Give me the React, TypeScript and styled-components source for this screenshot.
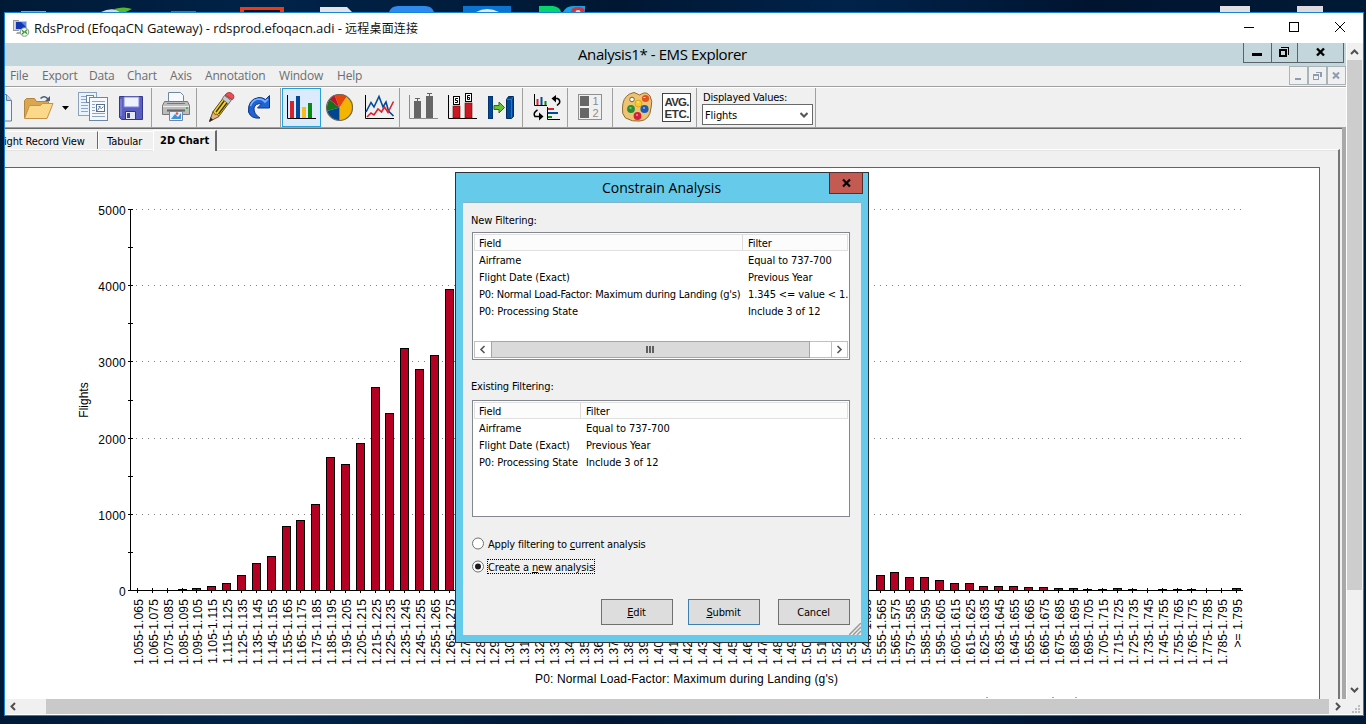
import React from "react";
import styled, { createGlobalStyle } from "styled-components";

const Global = createGlobalStyle`
  * { box-sizing: border-box; }
  html, body { margin: 0; padding: 0; }
  body { width: 1366px; height: 724px; overflow: hidden; background: #001a38; }
`;

const tahoma = `"DejaVu Sans Condensed", "DejaVu Sans", sans-serif`;
const segoe = `"Open Sans", "Noto Sans", "Noto Sans CJK SC", sans-serif`;

const Desktop = styled.div`
  width: 1366px;
  height: 724px;
  overflow: hidden;
  background: linear-gradient(90deg, #001a36 0%, #002348 20%, #001733 45%, #00234a 62%, #001430 80%, #001a36 100%);
  display: flex;
  flex-direction: column;
  font-family: ${tahoma};
  font-size: 11px;
  color: #000;
`;

const Wallpaper = styled.svg`
  display: block;
  flex: none;
`;

const RdpWindow = styled.div`
  margin-left: 4px;
  width: 1360px;
  height: 704px;
  border: 1px solid #1883d7;
  background: #fff;
  display: flex;
  flex-direction: column;
`;

const RdpTitleBar = styled.div`
  height: 30px;
  flex: none;
  display: flex;
  align-items: center;
  justify-content: space-between;
  padding-left: 8px;
`;

const RdpTitle = styled.div`
  display: flex;
  align-items: center;
  font-family: ${segoe};
  font-size: 13px;
  letter-spacing: -0.08px;
  color: #111;
  white-space: pre;
  svg { margin-right: 4px; }
`;

const HanText = styled.span`
  font-family: "Noto Sans CJK SC", sans-serif;
  font-size: 12px;
  line-height: 16px;
  letter-spacing: 0.2px;
`;

const RdpBody = styled.div`
  display: flex;
  height: 656px;
`;

const Remote = styled.div`
  width: 1341px;
  height: 656px;
  background: #f0f0f0;
  display: flex;
  flex-direction: column;
`;

const VScroll = styled.div`
  width: 17px;
  border-left: 1px solid #fff;
  background: #f0f0f0;
  display: flex;
  flex-direction: column;
  justify-content: space-between;
`;

const VThumb = styled.div`
  width: 15px;
  height: 530px;
  background: #cdcdcd;
  margin-bottom: auto;
`;

const HScroll = styled.div`
  height: 15px;
  display: flex;
  background: #f0f0f0;
`;

const HThumb = styled.div`
  margin-left: 24px;
  width: 1283px;
  background: #c9c9c9;
`;

const AppTitleBar = styled.div`
  height: 23px;
  flex: none;
  background: #c3d6dc;
  display: flex;
  align-items: flex-start;
  justify-content: flex-end;
`;

const AppTitle = styled.div`
  flex: 1;
  padding-left: 573px;
  line-height: 23px;
  font-family: ${segoe};
  font-size: 15px;
  letter-spacing: -0.4px;
  white-space: nowrap;
`;

const MenuBar = styled.div`
  height: 20px;
  flex: none;
  display: flex;
  justify-content: space-between;
`;

const MenuItems = styled.div`
  display: flex;
  padding-left: 5px;
  font-family: ${segoe};
  font-size: 12px;
  line-height: 20px;
  color: #6d6d6d;
`;

const MenuItem = styled.span<{ $w: number }>`
  width: ${(p) => p.$w}px;
  letter-spacing: -0.2px;
  white-space: nowrap;
`;

const Toolbar = styled.div`
  height: 43px;
  flex: none;
  display: flex;
  border-top: 1px solid #a0a0a0;
  border-bottom: 1px solid #696969;
  box-shadow: inset 0 1px 0 #fff, inset 0 -1px 0 #a0a0a0;
  padding: 1px 0;
`;

const ToolGroup = styled.div<{ $lead?: number }>`
  display: flex;
  padding-left: ${(p) => p.$lead ?? 0}px;
  border-right: 1px solid #a0a0a0;
`;

const ToolButton = styled.div<{ $w: number; $active?: boolean }>`
  width: ${(p) => p.$w}px;
  height: 39px;
  background: ${(p) => (p.$active ? "#dcebfc" : "transparent")};
  box-shadow: ${(p) => (p.$active ? "inset 0 0 0 1px #26a0da" : "none")};
  svg { display: block; }
`;

const ValuesBox = styled.div`
  width: 118px;
  padding: 3px 0 0 5px;
`;

const ValuesLabel = styled.div`
  height: 13px;
  line-height: 13px;
  padding-left: 1px;
  letter-spacing: -0.2px;
  white-space: nowrap;
`;

const Select = styled.div`
  width: 111px;
  height: 21px;
  border: 1px solid #696969;
  background: #fff;
  display: flex;
  align-items: center;
  justify-content: space-between;
  padding: 1px 4px 0 2px;
  letter-spacing: -0.1px;
`;

const TabRow = styled.div`
  height: 20px;
  flex: none;
  display: flex;
  align-items: flex-end;
`;

const Tab = styled.div<{ $w: number; $active?: boolean; $pad?: number; $shift?: number; $ls?: number; $edge?: string }>`
  position: relative;
  width: ${(p) => p.$w}px;
  height: ${(p) => (p.$active ? 21 : 18)}px;
  margin-bottom: ${(p) => (p.$active ? -2 : 0)}px;
  line-height: 20px;
  padding-left: ${(p) => p.$pad ?? 0}px;
  text-indent: ${(p) => p.$shift ?? 0}px;
  overflow: hidden;
  background: #f0f0f0;
  font-weight: ${(p) => (p.$active ? "bold" : "normal")};
  letter-spacing: ${(p) => p.$ls ?? 0}px;
  border-top: 1px solid #fff;
  border-left: ${(p) => (p.$shift ? "0" : "1px solid #fff")};
  border-right: ${(p) => p.$edge ?? "0"};
  white-space: nowrap;
`;

const Pane = styled.div`
  flex: 1;
  display: flex;
  justify-content: space-between;
`;

const PaneMain = styled.div`
  width: 1335px;
  border-top: 1px solid #fff;
  border-right: 2px solid #777;
  box-shadow: inset 0 1px 0 #e3e3e3;
  padding-top: 17px;
`;

const PaneEdge = styled.div`
  width: 4px;
  margin-top: -22px;
  background: #a9a9a9;
`;

const ChartFrame = styled.div`
  width: 1315px;
  height: 532px;
  background: #fff;
  border-top: 1px solid #646464;
  border-right: 1px solid #646464;
  svg { display: block; }
`;

const Dialog = styled.div`
  position: absolute;
  left: 455px;
  top: 172px;
  width: 414px;
  height: 471px;
  border: 1px solid #2b3338;
  background: #66caea;
  padding: 0 7px 7px;
  display: flex;
  flex-direction: column;
`;

const DialogTitleBar = styled.div`
  height: 29px;
  flex: none;
  display: flex;
  justify-content: flex-end;
  margin-right: -2px;
`;

const DialogTitle = styled.div`
  flex: 1;
  padding-left: 139px;
  line-height: 30px;
  font-family: ${segoe};
  font-size: 14px;
  letter-spacing: -0.02px;
  white-space: nowrap;
`;

const DialogClose = styled.div`
  width: 34px;
  height: 22px;
  margin-top: -1px;
  background: #c35b52;
  border: 1px solid #53302f;
  svg { display: block; margin: 5px 0 0 11px; }
`;

const DialogBody = styled.div`
  flex: 1;
  position: relative;
  background: #f0f0f0;
  border-top: 1px solid #7fb3c6;
  padding: 0 11px 0 9px;
`;

const SectionLabel = styled.div<{ $top: number; $h: number }>`
  height: ${(p) => p.$h}px;
  line-height: 14px;
  padding-top: ${(p) => p.$top}px;
  margin-left: -1px;
  letter-spacing: -0.15px;
`;

const ListView = styled.div<{ $h: number }>`
  width: 378px;
  height: ${(p) => p.$h}px;
  border: 1px solid #828790;
  background: #fff;
  padding: 1px;
  overflow: hidden;
  display: flex;
  flex-direction: column;
`;

const ListHead = styled.div`
  display: flex;
  height: 17px;
  flex: none;
  background: #fcfcfc;
  border: 1px solid #e0e0e0;
  line-height: 17px;
`;

const ListRow = styled.div`
  display: flex;
  height: 17px;
  flex: none;
  line-height: 20px;
  padding-left: 1px;
`;

const Cell = styled.span<{ $w?: number; $head?: boolean; $ls?: number }>`
  width: ${(p) => (p.$w ? p.$w + "px" : "auto")};
  height: ${(p) => (p.$head ? 15 : 17)}px;
  flex: none;
  padding-left: ${(p) => (p.$w ? 4 : 5)}px;
  border-right: ${(p) => (p.$head && p.$w ? "1px solid #dcdcdc" : "0")};
  letter-spacing: ${(p) => p.$ls ?? -0.1}px;
  white-space: nowrap;
`;

const ListScroll = styled.div`
  height: 17px;
  margin-top: auto;
  flex: none;
  display: flex;
  border: 1px solid #c0c0c0;
`;

const ScrollArrow = styled.div<{ $edge: "left" | "right" }>`
  width: 16px;
  display: flex;
  align-items: center;
  justify-content: center;
  border-left: ${(p) => (p.$edge === "right" ? "1px solid #c0c0c0" : "0")};
`;

const ScrollThumb = styled.div`
  width: 320px;
  margin: -1px 21px -1px 0;
  border: 1px solid #a6a6a6;
  background: #dadada;
  display: flex;
  align-items: center;
  justify-content: center;
  padding-right: 2px;
`;

const RadioRow = styled.div<{ $top: number }>`
  display: flex;
  align-items: center;
  gap: 3px;
  height: 15px;
  margin-top: ${(p) => p.$top}px;
`;

const RadioText = styled.span<{ $focus?: boolean }>`
  height: 15px;
  line-height: 17px;
  padding: 0 1px;
  letter-spacing: ${(p) => (p.$focus ? -0.14 : -0.2)}px;
  white-space: nowrap;
  outline: ${(p) => (p.$focus ? "1px dotted #000" : "none")};
  outline-offset: -1px;
`;

const ButtonRow = styled.div`
  display: flex;
  justify-content: flex-end;
  margin-top: 25px;
`;

const PushButton = styled.button<{ $gap: number; $default?: boolean }>`
  width: 72px;
  height: 26px;
  padding: 0 1px 0 0;
  margin: 0 0 0 ${(p) => p.$gap}px;
  border: 1px solid ${(p) => (p.$default ? "#3c7fb1" : "#707070")};
  border-radius: 0;
  background: #dddddd;
  font-family: ${tahoma};
  font-size: 11px;
  letter-spacing: -0.15px;
  color: #000;
`;

const SizeGrip = styled.svg`
  position: absolute;
  right: 0;
  bottom: 0;
`;

/* Toolbar glyphs share one coordinate system whose x runs along the toolbar. */
const Tool = ({ x, w, active, children }: { x: number; w: number; active?: boolean; children: React.ReactNode }) => (
  <ToolButton $w={w} $active={active}>
    <svg width={w} height={39} viewBox={`${x} 88 ${w} 39`}>{children}</svg>
  </ToolButton>
);

const tops: Record<number, number> = {
  3: 589, 4: 588, 5: 586, 6: 583, 7: 575, 8: 563, 9: 556, 10: 526, 11: 520, 12: 504, 13: 457, 14: 464,
  15: 443, 16: 387, 17: 413, 18: 348, 19: 369, 20: 355, 21: 289, 50: 575, 51: 572, 52: 577, 53: 577,
  54: 580, 55: 583, 56: 583, 57: 586, 58: 586, 59: 586, 60: 587, 61: 587, 62: 588, 63: 588, 64: 589,
  65: 589, 66: 588, 67: 589, 69: 589, 70: 589, 71: 589, 74: 588,
};

const majors: [number, string][] = [
  [209, "5000"], [285, "4000"], [361, "3000"], [438, "2000"], [514, "1000"], [590, "0"],
];
const minors = [247, 323, 400, 476, 552];

const Chart = () => (
  <svg width={1314} height={531} viewBox="5 168 1314 531" fontFamily='"Liberation Sans", Arial, sans-serif' fontSize="12">
    {majors.slice(0, 5).map(([y]) => (
      <line key={y} x1={136} x2={1243} y1={y + 0.5} y2={y + 0.5} stroke="#808080" strokeDasharray="1 5" />
    ))}
    {Array.from({ length: 75 }, (_, i) => {
      const c = Math.floor(137.5 + i * 14.85);
      const top = tops[i];
      const lo = (1.055 + i * 0.01).toFixed(3);
      const hi = (1.065 + i * 0.01).toFixed(3);
      return (
        <g key={i}>
          {top && <rect x={c - 4} y={top} width={9} height={591 - top} fill="#000" />}
          {top && top < 589 && <rect x={c - 3} y={top + 1} width={7} height={589 - top} fill="#b40023" />}
          <rect x={c} y={top && top < 588 ? 590 : 588} width={1} height={top && top < 588 ? 3 : 5} fill="#000" />
          <text transform={`translate(${c + 5.6} 599) rotate(-90)`} textAnchor="end" letterSpacing="0.15">
            {i === 74 ? ">= 1.795" : `${lo}-${hi}`}
          </text>
        </g>
      );
    })}
    <rect x={130} y={209} width={1} height={382} />
    <rect x={128} y={590} width={1115} height={1} />
    {majors.map(([y, t]) => (
      <g key={t}>
        <rect x={128} y={y} width={5} height={1} />
        <text x={126} y={y + 6} textAnchor="end" letterSpacing="0.25">{t}</text>
      </g>
    ))}
    {minors.map((y) => <rect key={y} x={128} y={y} width={5} height={1} />)}
    <text transform="translate(87.5 400) rotate(-90)" textAnchor="middle">Flights</text>
    <text x={535} y={683} textLength={303}>P0: Normal Load-Factor: Maximum during Landing (g's)</text>
    {[986, 1052, 1075].map((x) => <rect key={x} x={x} y={697} width={2} height={1} fill="#aaa" />)}
  </svg>
);

const RdpIcon = () => (
  <svg width="17" height="17" viewBox="0 0 17 17">
    <rect x="0.5" y="0.5" width="5" height="10" fill="#d8d8d8" stroke="#999" />
    <rect x="2.5" y="1.5" width="11" height="8" fill="#1238b8" stroke="#c4c8cc" />
    <path d="M8 2h5v5z" fill="#5b86e8" />
    <path d="M4 12h6l2 2H3z" fill="#aaa" />
    <circle cx="11.5" cy="12" r="4.3" fill="#f2f5ee" stroke="#8b948a" />
    <path d="M9 10.2l2 2-2 2M14 9.8l-2 2 2 2" stroke="#2f9d35" strokeWidth="1.3" fill="none" />
  </svg>
);

const Wall = () => (
  <Wallpaper width={1366} height={12} viewBox="0 0 1366 12">
    <rect x="21" y="11" width="25" height="1" fill="#a8a08a" />
    <path d="M101 12q8-4 16-2l4 2z" fill="#d9dde0" />
    <path d="M114 9q10-3 18 0l-6 3h-6z" fill="#56b82c" />
    <rect x="171" y="11" width="25" height="1" fill="#6b7060" />
    <path d="M240 7h44v5h-4v-2h-36v2h-4z" fill="#ef3a14" />
    <rect x="244" y="10" width="36" height="2" fill="#250a04" />
    <path d="M320 7h27l5 5h-32z" fill="#e4e4e6" />
    <path d="M389 12q2-6 9-6h27q7 0 9 6z" fill="#2f8af0" />
    <rect x="463" y="6" width="48" height="6" fill="#0a74d2" />
    <path d="M476 12q11-6 23 0z" fill="#e6eaf0" />
    <path d="M539 6h14q7 1 8 6h-22z" fill="#05d36c" />
    <path d="M563 12q3-6 10-6h12v6z" fill="#18a2e4" />
    <path d="M571 12q0-5 7-5t7 5z" fill="#d8333c" />
    <path d="M575.500 12q0-2 2.500-2t2.500 2z" fill="#f6d5d6" />
    <rect x="1220" y="6" width="30" height="6" fill="#e2e0e3" />
    <rect x="1297" y="6" width="26" height="6" fill="#dedadf" />
  </Wallpaper>
);

const RdpControls = () => (
  <svg width="124" height="30" viewBox="1239 13 124 30" shapeRendering="crispEdges" stroke="#000" fill="none">
    <path d="M1244 27.500h10" />
    <rect x="1289.500" y="22.500" width="9" height="9" />
    <path d="M1335 22l10 10M1345 22l-10 10" shapeRendering="auto" />
  </svg>
);

const AppControls = () => (
  <svg width="103" height="20" viewBox="1243 43 103 20" shapeRendering="crispEdges">
    <path d="M1243.500 43v19.500h100V43M1271.500 43v19M1297.500 43v19" stroke="#5a6468" fill="none" />
    <rect x="1252" y="53" width="10" height="3" />
    <path d="M1280 50h6v6h-6z" fill="none" stroke="#000" strokeWidth="2" />
    <path d="M1281 47.500h7.500v7" fill="none" stroke="#000" />
    <path d="M1317 48.500l7 7M1324 48.500l-7 7" stroke="#000" strokeWidth="2.400" shapeRendering="auto" />
  </svg>
);

const MdiControls = () => (
  <svg width="57" height="19" viewBox="1289 66 57 19" shapeRendering="crispEdges" fill="none" stroke="#a9b3ba">
    <rect x="1289.500" y="66.500" width="18" height="18" />
    <rect x="1308.500" y="66.500" width="18" height="18" />
    <rect x="1327.500" y="66.500" width="18" height="18" />
    <path d="M1295 79h6" stroke="#8d9cae" strokeWidth="2" />
    <path d="M1313.500 75.500h5v4h-5zM1313 75h6M1316 72.500h5v4h-1" stroke="#8d9cae" strokeWidth="1.400" />
    <path d="M1333 72.500l6 6M1339 72.500l-6 6" stroke="#8d9cae" strokeWidth="2" shapeRendering="auto" />
  </svg>
);

const ToolbarRow = () => (
  <Toolbar>
    <ToolGroup>
      <Tool x={5} w={11}>
        <path d="M4 94.500h2.500l5 6v20.500H4z" fill="#eef4fb" stroke="#64809c" />
        <path d="M6.500 94.500v6h5" fill="#bcd0e4" stroke="#64809c" />
      </Tool>
      <Tool x={16} w={42}>
        <path d="M24.500 118V100.500l2-2h8l2 3h12v5" fill="#d9a750" stroke="#b5853a" />
        <path d="M24.500 118.500l5-13h11l2-2h10.500l-6 15z" fill="#fbd88a" stroke="#c4924a" />
        <path d="M40.500 98.500q4-4 8 1" fill="none" stroke="#49617c" strokeWidth="1.500" />
        <path d="M50 96v5h-5z" fill="#49617c" />
      </Tool>
      <Tool x={58} w={16}><path d="M62 106h7l-3.500 4z" /></Tool>
      <Tool x={74} w={39}>
        <rect x="78.500" y="92.500" width="18" height="23" fill="#eaf2fb" stroke="#8ba2bd" />
        <path d="M81 96.500h6M81 99.500h5M81 102.500h5M81 105.500h7M81 108.500h7M81 111.500h7" stroke="#8ba6c6" />
        <rect x="86.500" y="95.500" width="7" height="7" fill="#fff" stroke="#6a86a8" />
        <rect x="89.500" y="97.500" width="18" height="23" fill="#f5f9fe" stroke="#6c86a4" />
        <path d="M92 101.500h13M92 104.500h3M92 107.500h3M92 110.500h3M92 113.500h13M92 116.500h13" stroke="#8ba6c6" />
        <rect x="96.500" y="104.500" width="8" height="7" fill="#fff" stroke="#566f90" />
        <path d="M97.500 110.500l2-3 2 1 2-2M98.500 106.500h2" stroke="#566f90" fill="none" />
      </Tool>
      <Tool x={113} w={38}>
        <path d="M119.500 96.500h23v23h-21l-2-2z" fill="#5a5ec0" stroke="#34388c" />
        <path d="M124 97h15v10h-15z" fill="#eef2ff" stroke="#7c86d6" />
        <path d="M125.500 111.500h10v8h-10z" fill="#e4e8f6" stroke="#30347e" />
        <rect x="127" y="113" width="3" height="5" fill="#3c4090" />
        <path d="M121 99v17" stroke="#8c92e2" />
      </Tool>
    </ToolGroup>
    <ToolGroup>
      <Tool x={152} w={44}>
        <path d="M168.500 104V92.500h12l3 3V104z" fill="#f6faff" stroke="#6f87a5" />
        <path d="M164.500 101.500h23l2 4v9h-27v-9z" fill="#bcbcbc" stroke="#777" />
        <path d="M163 106.500h26" stroke="#eee" />
        <path d="M167 103.500h18" stroke="#777" strokeWidth="1" />
        <path d="M167 110.500h18" stroke="#666" strokeWidth="2" />
        <rect x="186" y="107" width="2" height="2" fill="#3fc040" />
        <path d="M169.500 111.500h13v9h-13z" fill="#e6f1ff" stroke="#6f87a5" />
        <path d="M171 119l4-5 3 3 3-4v6z" fill="#3f93da" />
        <circle cx="177" cy="113.500" r="1.300" fill="#e3502c" />
      </Tool>
    </ToolGroup>
    <ToolGroup>
      <Tool x={197} w={43}>
        <path d="M209.500 121.500l4-10.500 12-16 6 4.500-12 16z" fill="#f3d331" stroke="#5b4a12" />
        <path d="M209.500 121.500l3.500-10 2 3 2-.5 2 2.500z" fill="#deb283" stroke="#7b552d" />
        <path d="M209.500 121.500l1-4 2.500 2z" fill="#222" />
        <path d="M216 112l11-15M218.500 114l11-14.500" stroke="#3e3410" strokeWidth="1.300" />
        <path d="M222 99l2.500-3.500 6.500 5-2.500 3.500z" fill="#c8ccd2" stroke="#777" />
        <path d="M225 95q3-4 7-1.500 3.500 3 .5 6z" fill="#ec4c56" stroke="#ad3a40" />
      </Tool>
      <Tool x={240} w={40}>
        <path d="M269.500 95.500v12.500h-12l4-4.200q-6-.8-7.500 4.200-.5 6 6 10-9 1-11.500-6-1-13 10.500-14.500 4 0 6.500 2z" fill="#1f63d8" stroke="#12347e" />
        <path d="M250.500 106q2-6.500 8.500-7 4 0 6 3l3-3" fill="none" stroke="#7cb7fb" strokeWidth="1.500" />
      </Tool>
    </ToolGroup>
    <ToolGroup $lead={1}>
      <Tool x={282} w={39} active>
        <path d="M287.500 95v23.500H316" stroke="#000" fill="none" />
        <rect x="290" y="101" width="4" height="17" fill="#d8222b" />
        <rect x="296" y="96" width="4" height="22" fill="#004a9c" />
        <rect x="302" y="107" width="4" height="11" fill="#fcb81f" />
        <rect x="308" y="103" width="4" height="15" fill="#068a10" />
      </Tool>
      <Tool x={321} w={39}>
        <path d="M339.500 107.500L347 96q7 4 6 14-3 10-13.500 10.500z" fill="#f5b400" />
        <path d="M339.500 107.500l-5-12.500q7-2.500 12.500 1z" fill="#e8440a" />
        <path d="M339.500 107.500l-10-8q2-4 5-4.500z" fill="#c4102c" />
        <path d="M339.500 107.500L327 111q-1-6 2.500-11.500z" fill="#17701c" />
        <path d="M339.500 107.500v13q-10-1-12.500-9.500z" fill="#00458f" />
        <circle cx="339.500" cy="107.500" r="13" fill="none" stroke="#6b6b62" strokeWidth="1.200" />
      </Tool>
      <Tool x={360} w={39}>
        <path d="M365.500 95v23.500H394" stroke="#000" fill="none" />
        <path d="M366 112l5-9.500 3 4.500 5-10.500 4 10.500 3-5 2.500 9 5 5" fill="none" stroke="#004a9c" strokeWidth="1.600" />
        <path d="M367 117l4-4 3 2 4-6 3.500 3 3-5 3.500 5.500 5.500-11" fill="none" stroke="#d8222b" strokeWidth="1.600" />
      </Tool>
    </ToolGroup>
    <ToolGroup>
      <Tool x={400} w={43}>
        <path d="M409.500 95v23.500H438" stroke="#8c8c8c" fill="none" />
        <path d="M417.500 98v5M415 98.500h5M429.500 93v5M427 93.500h5" stroke="#666" />
        <rect x="414" y="101" width="7" height="17" fill="#666" />
        <rect x="426" y="96" width="7" height="22" fill="#666" />
      </Tool>
      <Tool x={443} w={39}>
        <path d="M448.500 95v23.500H477" stroke="#000" fill="none" />
        <rect x="453" y="106" width="7" height="12" fill="#cc1820" stroke="#5e0a0e" strokeWidth=".6" />
        <rect x="465" y="103" width="7" height="15" fill="#cc1820" stroke="#5e0a0e" strokeWidth=".6" />
        <rect x="453.500" y="96.500" width="6" height="8" fill="#fff" stroke="#000" />
        <rect x="465.500" y="93.500" width="6" height="8" fill="#fff" stroke="#000" />
        <path d="M458 98.500h-2.500v2h2v2h-2.500M470 95.500h-2.500v4h2v-2h-2" stroke="#000" fill="none" />
      </Tool>
      <Tool x={482} w={40}>
        <rect x="488.500" y="96.500" width="4" height="22" fill="#004a9c" stroke="#00356f" />
        <path d="M494 105.500h5v-3.500l5.500 5.500-5.500 5.500v-3.500h-5z" fill="#66c52c" stroke="#2f6b16" />
        <path d="M506.500 99.500l2-3h5v20l-2 2h-5z" fill="#004a9c" stroke="#002a5a" />
        <path d="M507 99.500h4.500v18M511.500 99.500l2-3" stroke="#5a8cc8" fill="none" strokeWidth=".6" />
      </Tool>
    </ToolGroup>
    <ToolGroup>
      <Tool x={523} w={44}>
        <path d="M534.500 94v11.500H547" stroke="#000" fill="none" />
        <path d="M537.500 99v6" stroke="#d8222b" strokeWidth="2" />
        <path d="M541.500 97v8" stroke="#004a9c" strokeWidth="2" />
        <path d="M545.500 101v4" stroke="#068a10" strokeWidth="2" />
        <path d="M555 98.500h2.500q3 1.500 2 4.500l-2.500 2.500" stroke="#000" strokeWidth="1.500" fill="none" />
        <path d="M556 95v7.500l-4.500-4z" />
        <path d="M537.500 110q-5 3-2.500 6.500h4" stroke="#000" strokeWidth="1.500" fill="none" />
        <path d="M539 112.500v8l4.500-4z" />
        <path d="M547.500 107v12.500H560" stroke="#000" fill="none" />
        <path d="M548 109h6" stroke="#d8222b" strokeWidth="2" />
        <path d="M548 113h10" stroke="#004a9c" strokeWidth="2" />
        <path d="M548 117h4" stroke="#068a10" strokeWidth="2" />
      </Tool>
    </ToolGroup>
    <ToolGroup>
      <Tool x={568} w={44}>
        <rect x="578.500" y="94.500" width="23" height="25" fill="#f0f0f0" stroke="#909090" />
        <rect x="580" y="96" width="9" height="10" fill="#666" />
        <rect x="580" y="108" width="9" height="10" fill="#666" />
        <text x="592.500" y="105" fontSize="11" fill="#8c8c8c" fontFamily="Liberation Sans, sans-serif">1</text>
        <text x="592.500" y="117" fontSize="11" fill="#8c8c8c" fontFamily="Liberation Sans, sans-serif">2</text>
      </Tool>
    </ToolGroup>
    <ToolGroup>
      <Tool x={613} w={44}>
        <path d="M622.500 108q0-10 7-14 5-3 8 0 2 2 4 0 5-3 8.500 2 3 5 1 12-1 12-11 13-8 1-14.500-3-4-4-3-10z" fill="#eec474" stroke="#8d6b2e" />
        <circle cx="632" cy="99.500" r="2.300" fill="#fff" stroke="#7d6128" />
        <circle cx="645.500" cy="98.500" r="3.600" fill="#e2521f" />
        <circle cx="638.500" cy="103.500" r="3.400" fill="#fccb1f" stroke="#c49010" strokeWidth=".6" />
        <circle cx="631" cy="109" r="3.900" fill="#2c8c32" />
        <circle cx="644.500" cy="109" r="4.100" fill="#1e5bb0" />
        <circle cx="637.500" cy="116" r="3.900" fill="#d2203a" />
        <path d="M643.500 97.500h2M637 102h2M629.500 108h2M643 108h2M636 115h2" stroke="#fff" opacity=".8" />
      </Tool>
      <Tool x={657} w={39}>
        <rect x="662.500" y="93.500" width="28" height="28" fill="#fff" stroke="#444" />
        <g fontFamily="Liberation Sans, sans-serif" fontSize="11.500" fontWeight="bold" fill="#333">
          <text x="664.500" y="106" textLength="25">AVG.</text>
          <text x="664.500" y="118" textLength="25">ETC.</text>
        </g>
      </Tool>
    </ToolGroup>
    <ToolGroup>
      <ValuesBox>
        <ValuesLabel>Displayed Values:</ValuesLabel>
        <Select>
          <span>Flights</span>
          <svg width="8" height="6" viewBox="0 0 8 6"><path d="M0.500 1L4 4.500 7.500 1" stroke="#555" strokeWidth="2" fill="none" /></svg>
        </Select>
      </ValuesBox>
    </ToolGroup>
  </Toolbar>
);

const Chevron = ({ d }: { d: string }) => (
  <svg width="9" height="9" viewBox="0 0 9 9"><path d={d} stroke="#555" strokeWidth="1.600" fill="none" /></svg>
);

const newRows: [string, string, number?][] = [
  ["Airframe", "Equal to 737-700"],
  ["Flight Date (Exact)", "Previous Year"],
  ["P0: Normal Load-Factor: Maximum during Landing (g's)", "1.345 <= value < 1.", -0.22],
  ["P0: Processing State", "Include 3 of 12"],
];
const oldRows: [string, string][] = [
  ["Airframe", "Equal to 737-700"],
  ["Flight Date (Exact)", "Previous Year"],
  ["P0: Processing State", "Include 3 of 12"],
];

const Radio = ({ on }: { on?: boolean }) => (
  <svg width="12" height="14" viewBox="0 0 12 14">
    <circle cx="6" cy="6.500" r="5.500" fill="#fff" stroke="#707070" />
    {on && <circle cx="6" cy="6.500" r="3" fill="#1c1c1c" />}
  </svg>
);

const ConstrainDialog = () => (
  <Dialog>
    <DialogTitleBar>
      <DialogTitle>Constrain Analysis</DialogTitle>
      <DialogClose>
        <svg width="11" height="11" viewBox="0 0 11 11"><path d="M2 1.500l7 7M9 1.500l-7 7" stroke="#000" strokeWidth="2.200" /></svg>
      </DialogClose>
    </DialogTitleBar>
    <DialogBody>
      <SectionLabel $top={11} $h={29}>New Filtering:</SectionLabel>
      <ListView $h={128}>
        <ListHead><Cell $w={268} $head>Field</Cell><Cell $head>Filter</Cell></ListHead>
        {newRows.map(([field, filter, ls]) => (
          <ListRow key={field}><Cell $w={268} $ls={ls}>{field}</Cell><Cell>{filter}</Cell></ListRow>
        ))}
        <ListScroll>
          <ScrollArrow $edge="left"><Chevron d="M6.500 1L3 4.500 6.500 8" /></ScrollArrow>
          <ScrollThumb>
            <svg width="8" height="7"><path d="M1 0v7M4 0v7M7 0v7" stroke="#606060" strokeWidth="2" /></svg>
          </ScrollThumb>
          <ScrollArrow $edge="right"><Chevron d="M2.500 1L6 4.500 2.500 8" /></ScrollArrow>
        </ListScroll>
      </ListView>
      <SectionLabel $top={20} $h={40}>Existing Filtering:</SectionLabel>
      <ListView $h={117}>
        <ListHead><Cell $w={106} $head>Field</Cell><Cell $head>Filter</Cell></ListHead>
        {oldRows.map(([field, filter]) => (
          <ListRow key={field}><Cell $w={106}>{field}</Cell><Cell>{filter}</Cell></ListRow>
        ))}
      </ListView>
      <RadioRow $top={19}><Radio /><RadioText>Apply filtering to <u>c</u>urrent analysis</RadioText></RadioRow>
      <RadioRow $top={8}><Radio on /><RadioText $focus>Create a <u>n</u>ew analysis</RadioText></RadioRow>
      <ButtonRow>
        <PushButton $gap={0}><u>E</u>dit</PushButton>
        <PushButton $gap={15} $default><u>S</u>ubmit</PushButton>
        <PushButton $gap={18}>Cancel</PushButton>
      </ButtonRow>
      <SizeGrip width="12" height="12" viewBox="0 0 12 12">
        <path d="M0 12L12 0M4 12l8-8M8 12l4-4" stroke="#9a9a9a" strokeWidth="1.500" />
      </SizeGrip>
    </DialogBody>
  </Dialog>
);

export default function App() {
  return (
    <>
      <Global />
      <Desktop>
        <Wall />
        <RdpWindow>
          <RdpTitleBar>
            <RdpTitle>
              <RdpIcon />
              <span>{"RdsProd (EfoqaCN Gateway) - rdsprod.efoqacn.adi - "}</span>
              <HanText>远程桌面连接</HanText>
            </RdpTitle>
            <RdpControls />
          </RdpTitleBar>
          <RdpBody>
            <Remote>
              <AppTitleBar>
                <AppTitle>Analysis1* - EMS Explorer</AppTitle>
                <AppControls />
              </AppTitleBar>
              <MenuBar>
                <MenuItems>
                  <MenuItem $w={32}>File</MenuItem>
                  <MenuItem $w={47}>Export</MenuItem>
                  <MenuItem $w={38}>Data</MenuItem>
                  <MenuItem $w={43}>Chart</MenuItem>
                  <MenuItem $w={35}>Axis</MenuItem>
                  <MenuItem $w={74}>Annotation</MenuItem>
                  <MenuItem $w={58}>Window</MenuItem>
                  <MenuItem $w={30}>Help</MenuItem>
                </MenuItems>
                <MdiControls />
              </MenuBar>
              <ToolbarRow />
              <TabRow>
                <Tab $w={93} $shift={-1} $ls={-0.15} $edge="1px solid #696969">ight Record View</Tab>
                <Tab $w={55} $pad={8} $ls={-0.05}>Tabular</Tab>
                <Tab $w={64} $pad={6} $active $edge="2px solid #696969">2D Chart</Tab>
              </TabRow>
              <Pane>
                <PaneMain><ChartFrame><Chart /></ChartFrame></PaneMain>
                <PaneEdge />
              </Pane>
            </Remote>
            <VScroll>
              <svg width="15" height="17"><path d="M4 11l3.500-3.500L11 11" stroke="#505050" strokeWidth="2" fill="none" /></svg>
              <VThumb />
              <svg width="15" height="17"><path d="M4 6l3.500 3.500L11 6" stroke="#505050" strokeWidth="2" fill="none" /></svg>
            </VScroll>
          </RdpBody>
          <HScroll>
            <svg width="17" height="15"><path d="M10 4L6.500 7.500 10 11" stroke="#505050" strokeWidth="2" fill="none" /></svg>
            <HThumb />
            <svg width="34" height="15">
              <path d="M7 4l3.500 3.500L7 11" stroke="#505050" strokeWidth="2" fill="none" />
              <path d="M29 6h2v2h-2zM26 9h2v2h-2zM29 9h2v2h-2zM23 12h2v2h-2zM26 12h2v2h-2zM29 12h2v2h-2z" fill="#bdbdbd" />
            </svg>
          </HScroll>
        </RdpWindow>
        <ConstrainDialog />
      </Desktop>
    </>
  );
}
